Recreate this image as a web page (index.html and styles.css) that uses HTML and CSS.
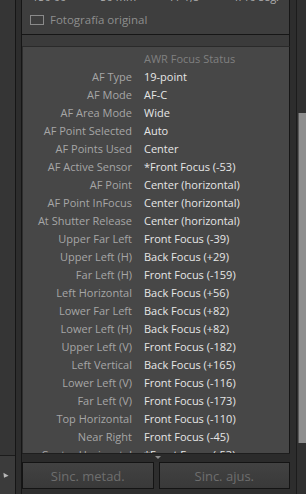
FILE: index.html
```html
<!DOCTYPE html>
<html lang="es">
<head>
    <meta charset="UTF-8">
    <meta name="viewport" content="width=device-width, initial-scale=1.0">
    <title>Metadatos</title>
    <link rel="stylesheet" href="styles.css">
</head>
<body>
    <div class="app">
        <div class="side-left">
            <div class="side-left-top"></div>
            <div class="side-left-bottom"><span class="corner-arrow"></span></div>
        </div>
        <div class="gutter"></div>

        <div class="main">
            <!-- EXIF panel, scrolled so only its last lines show -->
            <div class="exif-panel">
                <div class="exif-line">
                    <span>150 00</span>
                    <span>50 mm</span>
                    <span>f / 1,8</span>
                    <span>1/10 seg.</span>
                </div>
                <label class="original-check">
                    <span class="checkbox"></span>
                    Fotografía original
                </label>
            </div>
            <div class="band"></div>

            <div class="focus-panel">
                <div class="focus-title">AWR Focus Status</div>
                <div class="meta-list" id="metaList"></div>
            </div>

            <div class="divider"><span class="divider-arrow"></span></div>

            <div class="sync-bar">
                <button class="sync-btn">Sinc. metad.</button>
                <button class="sync-btn">Sinc. ajus.</button>
            </div>
        </div>

        <div class="gutter gutter-right"></div>
        <div class="scrollbar">
            <div class="scroll-thumb"></div>
        </div>
    </div>

    <script>
        document.addEventListener('DOMContentLoaded', () => {
            const metaList = document.getElementById('metaList');

            const rows = [
                ['AF Type', '19-point'],
                ['AF Mode', 'AF-C'],
                ['AF Area Mode', 'Wide'],
                ['AF Point Selected', 'Auto'],
                ['AF Points Used', 'Center'],
                ['AF Active Sensor', '*Front Focus (-53)'],
                ['AF Point', 'Center (horizontal)'],
                ['AF Point InFocus', 'Center (horizontal)'],
                ['At Shutter Release', 'Center (horizontal)'],
                ['Upper Far Left', 'Front Focus (-39)'],
                ['Upper Left (H)', 'Back Focus (+29)'],
                ['Far Left (H)', 'Front Focus (-159)'],
                ['Left Horizontal', 'Back Focus (+56)'],
                ['Lower Far Left', 'Back Focus (+82)'],
                ['Lower Left (H)', 'Back Focus (+82)'],
                ['Upper Left (V)', 'Front Focus (-182)'],
                ['Left Vertical', 'Back Focus (+165)'],
                ['Lower Left (V)', 'Front Focus (-116)'],
                ['Far Left (V)', 'Front Focus (-173)'],
                ['Top Horizontal', 'Front Focus (-110)'],
                ['Near Right', 'Front Focus (-45)'],
                ['Center Horizontal', '*Front Focus (-53)']
            ];

            rows.forEach(([label, value]) => {
                const row = document.createElement('div');
                row.className = 'meta-row';

                const l = document.createElement('span');
                l.className = 'meta-label';
                l.textContent = label;

                const v = document.createElement('span');
                v.className = 'meta-value';
                v.textContent = value;

                row.appendChild(l);
                row.appendChild(v);
                metaList.appendChild(row);
            });
        });
    </script>
</body>
</html>
```

FILE: styles.css
```css
:root {
    --ui-font: 'Open Sans', 'Noto Sans', sans-serif;
    --line-dark: #161616;
    --panel-bg: #474747;
    --exif-bg: #3e3e3e;
    --label-color: #a6a6a6;
    --value-color: #e6e6e6;
    --title-color: #808080;
}

body {
    margin: 0;
    background-color: #2a2a2a;
    font-family: var(--ui-font);
    font-size: 11px;
    overflow: hidden;
}

.app {
    display: flex;
    width: 306px;
    height: 494px;
}

/* Left edge: neighbouring panel */
.side-left {
    width: 15px;
    display: flex;
    flex-direction: column;
    border-right: 1px solid var(--line-dark);
}

.side-left-top {
    flex: 1;
    background-color: #353535;
    border-bottom: 1px solid #1c1c1c;
}

.side-left-bottom {
    height: 38px;
    background-color: #3b3b3b;
    position: relative;
}

.corner-arrow {
    position: absolute;
    left: 2px;
    top: 18px;
    width: 0;
    height: 0;
    border-left: 3px solid transparent;
    border-right: 3px solid transparent;
    border-top: 4px solid #b8b8b8;
    transform: rotate(30deg);
}

.gutter {
    width: 5px;
    background-color: #2d2d2d;
    border-right: 1px solid var(--line-dark);
}

.gutter-right {
    width: 6px;
    border-right: 1px solid #1c1c1c;
}

/* Middle column */
.main {
    width: 268px;
    display: flex;
    flex-direction: column;
}

.exif-panel {
    height: 34px;
    flex-shrink: 0;
    background-color: var(--exif-bg);
    border-right: 1px solid var(--line-dark);
    border-bottom: 1px solid var(--line-dark);
    overflow: hidden;
}

.exif-line {
    display: flex;
    justify-content: space-between;
    padding: 0 10px;
    margin-top: -11px;
    line-height: 16px;
    color: #b0b0b0;
}

.original-check {
    display: flex;
    align-items: center;
    gap: 6px;
    padding-left: 8px;
    margin-top: 7px;
    line-height: 16px;
    font-size: 11.5px;
    color: #8e8e8e;
}

.checkbox {
    width: 12px;
    height: 8px;
    border: 1px solid #8a8a8a;
}

.band {
    height: 11px;
    flex-shrink: 0;
    background-color: #3b3b3b;
    border-right: 1px solid var(--line-dark);
    border-bottom: 1px solid #2a2a2a;
}

.focus-panel {
    flex: 1;
    background-color: var(--panel-bg);
    border-left: 1px solid #2e2e2e;
    border-right: 1px solid var(--line-dark);
    padding-top: 3px;
    overflow: hidden;
}

.focus-title {
    line-height: 18px;
    padding-left: 121px;
    color: var(--title-color);
}

.meta-row {
    display: grid;
    grid-template-columns: 109px 1fr;
    column-gap: 12px;
    line-height: 18px;
    height: 18px;
    white-space: nowrap;
}

.meta-label {
    text-align: right;
    color: var(--label-color);
}

.meta-value {
    color: var(--value-color);
}

.divider {
    height: 8px;
    flex-shrink: 0;
    background-color: #2b2b2b;
    border-top: 1px solid #1e1e1e;
    position: relative;
}

.divider-arrow {
    position: absolute;
    left: 133px;
    top: 2px;
    width: 0;
    height: 0;
    border-left: 3px solid transparent;
    border-right: 3px solid transparent;
    border-top: 3px solid #8c8c8c;
}

.sync-bar {
    height: 32px;
    flex-shrink: 0;
    background-color: #2e2e2e;
    display: flex;
    gap: 5px;
}

.sync-btn {
    flex: 1;
    height: 27px;
    margin: 0;
    padding: 0;
    background: linear-gradient(#424242, #393939);
    border: 1px solid #141414;
    color: #6e6e6e;
    font-family: var(--ui-font);
    font-size: 13px;
}

/* Right scrollbar */
.scrollbar {
    flex: 1;
    background-color: #303030;
    position: relative;
}

.scroll-thumb {
    position: absolute;
    left: 1px;
    right: 0;
    top: 113px;
    height: 330px;
    background-color: #8e8e8e;
    border-left: 1px solid #5a5a5a;
}
```
